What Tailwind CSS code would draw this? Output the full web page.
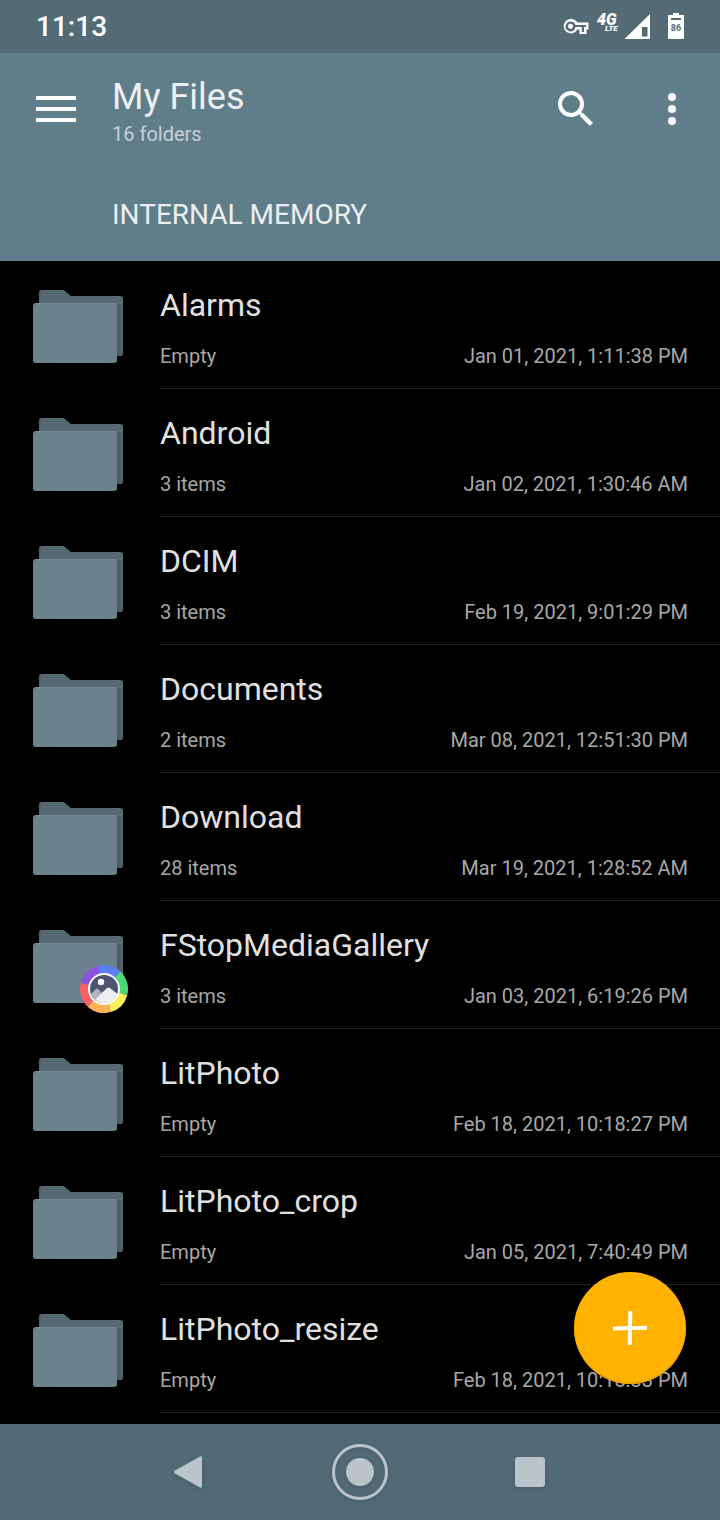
<!DOCTYPE html>
<html lang="en">
<head>
<meta charset="utf-8">
<meta name="viewport" content="width=device-width, initial-scale=1">
<title>My Files</title>
<script src="https://cdn.jsdelivr.net/npm/@tailwindcss/browser@4"></script>
</head>
<body class="bg-black font-['Roboto',sans-serif] text-[#e0e0e0]">
<svg width="0" height="0" class="absolute" aria-hidden="true">
  <defs>
    <linearGradient id="edge" gradientUnits="userSpaceOnUse" x1="84" x2="91" y1="0" y2="0">
      <stop offset="0" stop-color="#445760"/><stop offset="1" stop-color="#566973"/>
    </linearGradient>
    <symbol id="folder" viewBox="0 0 96 86">
      <path fill="#566973" d="M10 2h20q2 0 3 1l6 5h49q3 0 3 3v54q0 3-3 3H10q-3 0-3-3V5q0-3 3-3z"/>
      <path fill="url(#edge)" d="M84 17h6v51h-6z"/>
      <rect x="1" y="15" width="84" height="60" rx="3" fill="#6b828e"/>
      <path d="M3 15.500h80" stroke="#718d98"/>
    </symbol>
    <symbol id="gallery" viewBox="-24 -24 48 48">
      <g fill="none" stroke-width="9">
        <path stroke="#5b7fee" d="M-5.500-18.700A19.500 19.500 0 0 1 13.400-14.200"/>
        <path stroke="#4cd973" d="M13.400-14.200A19.500 19.500 0 0 1 18.900 5"/>
        <path stroke="#fff05a" d="M18.900 5A19.500 19.500 0 0 1 5.500 18.700"/>
        <path stroke="#ffb25a" d="M5.500 18.700A19.500 19.500 0 0 1-13.400 14.200"/>
        <path stroke="#ff5f66" d="M-13.400 14.200A19.500 19.500 0 0 1-18.700-5"/>
        <path stroke="#8953dd" d="M-18.700-5A19.500 19.500 0 0 1-5.500-18.700"/>
      </g>
      <circle r="16" fill="#fff"/>
      <circle r="14" fill="#4b5470"/>
      <path fill="#afb4c2" d="M-13 5l5-5q1-1 2 0l4 4-7 8q-3-3-4-7z"/>
      <path fill="#eee" d="M-9 10.500L3-1q1.500-1 3 0l7.500 6A14 14 0 0 1-9 10.500z"/>
      <circle cx="-3" cy="-7" r="3.200" fill="#fff"/>
    </symbol>
  </defs>
</svg>

<div class="flex min-h-screen flex-col">
  <div class="flex h-[53px] items-center justify-between bg-[#546b76] pr-9 pl-9 text-white">
    <time class="text-[28px] leading-8 font-medium">11:13</time>
    <svg class="h-8 w-[122px]" viewBox="562 11 122 32" fill="#fff" role="img" aria-label="VPN, 4G LTE, signal, battery 86 percent">
      <path fill-rule="evenodd" d="M570.500 19a7.200 7.200 0 1 0 6.800 10.500H579.500v4.500h7v-4.500h2v-7h-11.200A7.200 7.200 0 0 0 570.500 19zm0 2.400q4 0 5 3.600h10.500v2h-2v5h-2.200v-5H575.500q-1 4.500-5 4.500a5 5 0 0 1 0-10.100zm0 2.400a2.500 2.500 0 1 0 0 5 2.500 2.500 0 0 0 0-5z"/>
      <g font-family="Roboto,sans-serif" font-weight="900" font-style="italic">
        <text x="597" y="25" font-size="16">4G</text>
        <text x="605" y="31" font-size="8">LTE</text>
      </g>
      <path fill-rule="evenodd" d="M650 14v25h-25.500zM642 27v9.500h5.500v-9.500z"/>
      <path d="M673 13h6v2h4q1 0 1 1v22q0 1-1 1h-14q-1 0-1-1V16q0-1 1-1h4z"/>
      <path fill="#546b76" d="M671 18h10v2h-10z"/>
      <text x="676" y="31" font-size="9" font-weight="700" text-anchor="middle" fill="#546b76" font-family="Roboto,sans-serif">86</text>
    </svg>
  </div>

  <header class="bg-[#607d8a] pt-6 pb-[30px]">
    <div class="flex items-start pr-4 pl-9">
      <button type="button" aria-label="Menu" class="flex h-16 w-10 items-center">
        <svg class="h-[26px] w-10" viewBox="0 0 40 26" fill="#fff"><path d="M0 0h40v4H0zM0 11h40v4H0zM0 22h40v4H0z"/></svg>
      </button>
      <div class="ml-9 flex-1">
        <h1 class="text-4xl/10 text-[#eceff1]">My Files</h1>
        <p class="mt-[5px] text-xl/6 text-[#c7d1d6]">16 folders</p>
      </div>
      <button type="button" aria-label="Search" class="flex h-16 w-16 items-center justify-center">
        <svg class="size-9" viewBox="0 0 36 36" fill="none" stroke="#fff"><circle cx="13" cy="13" r="11" stroke-width="4"/><path d="M21 21l3 3" stroke-width="3"/><path d="M23.500 23.500l10 10" stroke-width="4.500"/></svg>
      </button>
      <button type="button" aria-label="More options" class="ml-8 flex h-16 w-16 items-center justify-center">
        <svg class="h-8 w-2" viewBox="0 0 8 32" fill="#fff"><circle cx="4" cy="4" r="4"/><circle cx="4" cy="16" r="4"/><circle cx="4" cy="28" r="4"/></svg>
      </button>
    </div>
    <h2 class="mt-[53px] pl-28 text-[28px] leading-8 text-[#eceff1]">INTERNAL MEMORY</h2>
  </header>

  <main class="relative flex-1">
    <ul id="files"></ul>
    <button type="button" aria-label="Add" class="absolute right-[34px] bottom-10 flex size-28 items-center justify-center rounded-full bg-[#ffb300] shadow-[inset_0_-2px_1px_#eda600]">
      <svg class="size-9" viewBox="0 0 36 36" fill="none" stroke="#fff" stroke-width="4"><path d="M18.300 1L17.700 35M1 18.500l34-.8"/></svg>
    </button>
  </main>

  <nav class="flex h-24 items-center justify-center gap-[114px] bg-[#526a76]" aria-label="System navigation">
    <button type="button" aria-label="Back"><svg class="size-14 drop-shadow-sm" viewBox="0 0 56 56" fill="#bac4ca"><path d="M38 12.500q2-1 2 1v29q0 2-2 1L13 29.500q-2-1.500 0-3z"/></svg></button>
    <button type="button" aria-label="Home"><svg class="size-14 drop-shadow-sm" viewBox="0 0 56 56" fill="#bac4ca"><circle cx="28" cy="28" r="14"/><circle cx="28" cy="28" r="26.500" fill="none" stroke="#bac4ca" stroke-width="3"/></svg></button>
    <button type="button" aria-label="Recent apps"><svg class="size-14 drop-shadow-sm" viewBox="0 0 56 56" fill="#bac4ca"><rect x="13" y="13" width="30" height="30" rx="3"/></svg></button>
  </nav>
</div>

<script>
const files = [
  ["Alarms", "Empty", "Jan 01, 2021, 1:11:38 PM"],
  ["Android", "3 items", "Jan 02, 2021, 1:30:46 AM"],
  ["DCIM", "3 items", "Feb 19, 2021, 9:01:29 PM"],
  ["Documents", "2 items", "Mar 08, 2021, 12:51:30 PM"],
  ["Download", "28 items", "Mar 19, 2021, 1:28:52 AM"],
  ["FStopMediaGallery", "3 items", "Jan 03, 2021, 6:19:26 PM", true],
  ["LitPhoto", "Empty", "Feb 18, 2021, 10:18:27 PM"],
  ["LitPhoto_crop", "Empty", "Jan 05, 2021, 7:40:49 PM"],
  ["LitPhoto_resize", "Empty", "Feb 18, 2021, 10:18:33 PM"],
];
document.getElementById("files").innerHTML = files.map(([name, count, date, gallery]) => `
  <li class="flex gap-8 pl-8">
    <svg class="mt-[27px] h-[86px] w-24 shrink-0" viewBox="0 0 96 86" aria-hidden="true">
      <use href="#folder" width="96" height="86"/>
      ${gallery ? '<use href="#gallery" x="48" y="37" width="48" height="48"/>' : ''}
    </svg>
    <div class="flex-1 border-b border-[#212121] pt-6 pr-8 pb-5">
      <h3 class="text-[32px] leading-10">${name}</h3>
      <div class="mt-[19px] flex justify-between text-xl/6 text-[#a8a8a8]"><span>${count}</span><span>${date}</span></div>
    </div>
  </li>`).join("");
</script>
</body>
</html>
